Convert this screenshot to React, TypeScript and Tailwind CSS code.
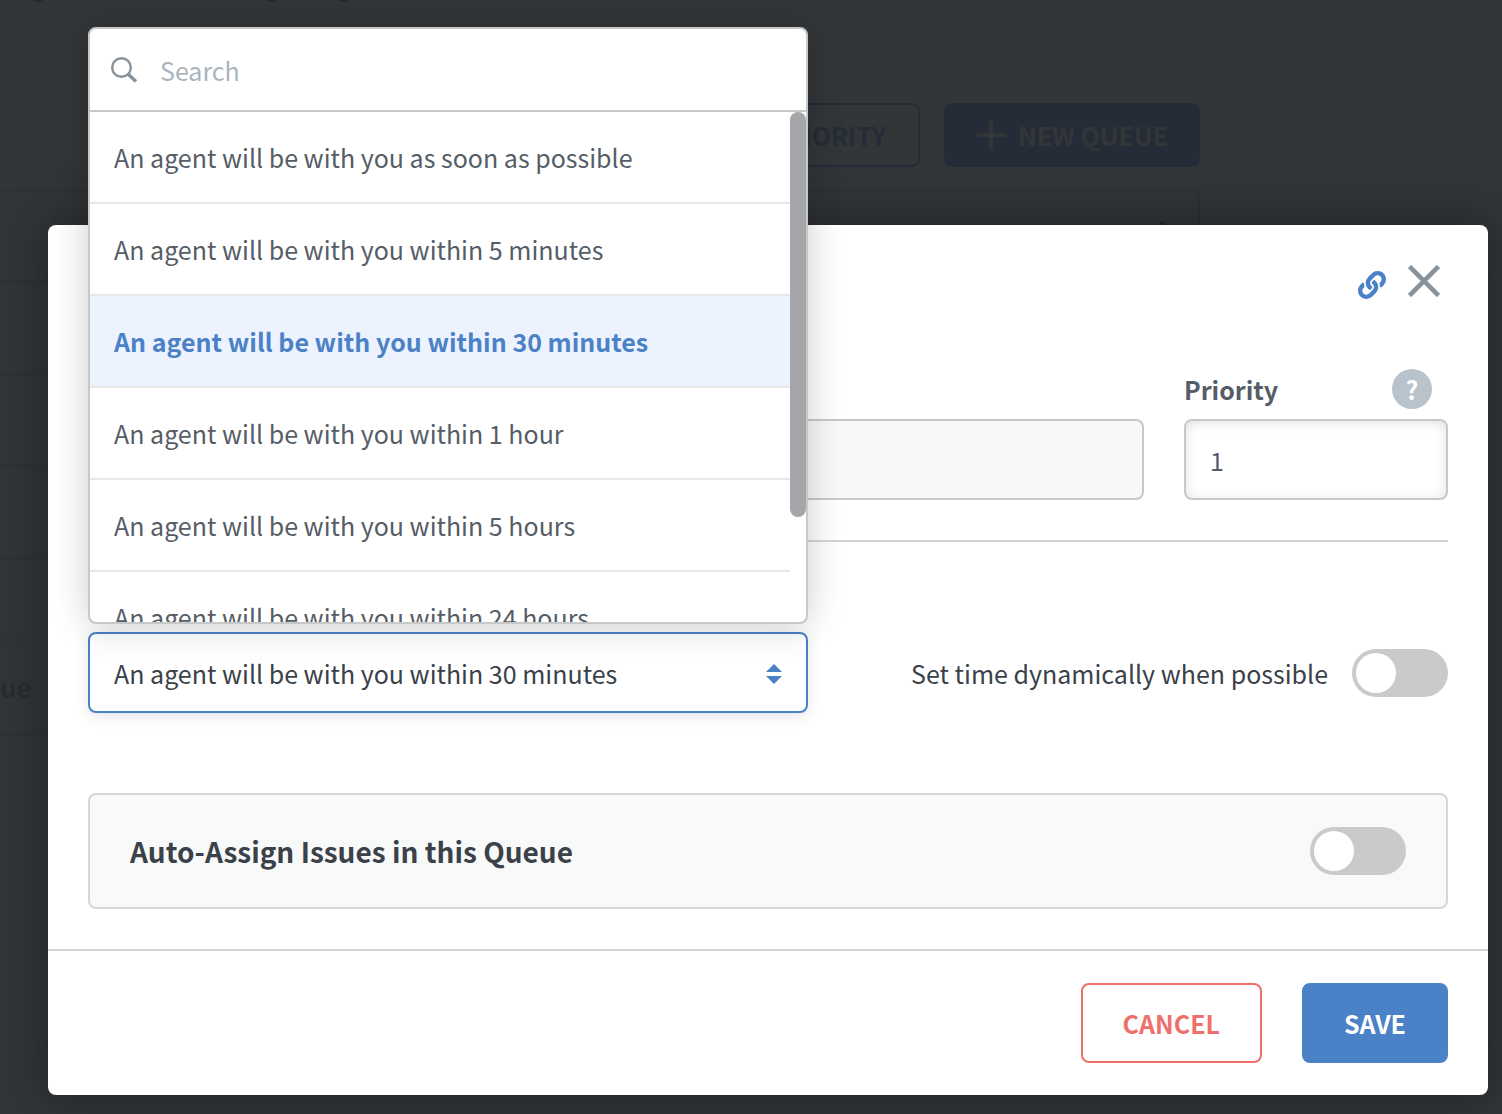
import { useState } from "react";
import { FaLink } from "react-icons/fa";

const waitMessages = [
  "An agent will be with you as soon as possible",
  "An agent will be with you within 5 minutes",
  "An agent will be with you within 30 minutes",
  "An agent will be with you within 1 hour",
  "An agent will be with you within 5 hours",
  "An agent will be with you within 24 hours",
];

const SearchIcon = () => (
  <svg className="w-7 h-7 shrink-0 text-[#87929a]" viewBox="0 0 28 28" fill="none" stroke="currentColor" aria-hidden="true">
    <circle cx="11.5" cy="11.5" r="9.3" strokeWidth="2.4" />
    <path d="M18 18L26 25.5" strokeWidth="3.4" />
  </svg>
);

const SortIcon = ({ className }: { className: string }) => (
  <svg className={className} viewBox="0 0 16 20" fill="currentColor" aria-hidden="true">
    <path d="M8 0L16 8H0Z" />
    <path d="M0 12H16L8 20Z" />
  </svg>
);

const Toggle = ({ id }: { id: string }) => (
  <input
    id={id}
    type="checkbox"
    role="switch"
    className="appearance-none shrink-0 w-24 h-12 p-1 rounded-full bg-[#c9cacc] cursor-pointer before:block before:w-10 before:h-10 before:rounded-full before:bg-white checked:bg-[#4b81c6] checked:before:ml-12"
  />
);

// Queue list that stays visible behind the dialog
const QueuePage = () => (
  <div className="absolute inset-0 overflow-hidden" aria-hidden="true">
    <svg className="block w-[400px] h-[3px] text-[#282b2d]" viewBox="0 0 400 3" fill="currentColor">
      <ellipse cx="38" cy="-1" rx="6" ry="3" />
      <ellipse cx="271" cy="-1" rx="6" ry="3" />
      <ellipse cx="343" cy="-1" rx="6" ry="3" />
    </svg>
    <div className="max-w-[1200px]">
      <div className="flex justify-end gap-6 pt-[100px] mb-[22px] font-bold">
        <button tabIndex={-1} className="h-16 px-8 rounded-lg border-2 border-[#252c38] text-[#252c38]">
          PRIORITY
        </button>
        <button tabIndex={-1} className="flex items-center gap-3 h-16 px-8 rounded-lg bg-[#252c38] text-[#323639]">
          <svg className="w-[30px] h-[30px]" viewBox="0 0 30 30" stroke="currentColor" strokeWidth="4">
            <path d="M15 1V29M1 15H29" />
          </svg>
          NEW QUEUE
        </button>
      </div>
      <div className="border-y-2 border-r-2 border-[#2e3234] rounded-tr-lg">
        <div className="flex justify-end h-[92px] pt-[30px] pr-7 border-b-2 border-[#2e3234]">
          <SortIcon className="w-4 h-5 text-[#202427]" />
        </div>
        <div className="h-[92px] border-b-2 border-[#2e3234]" />
        <div className="h-[92px] border-b-2 border-[#2e3234]" />
        <div className="h-[92px] border-b-2 border-[#2e3234]" />
        <div className="h-[82px] border-b-2 border-[#2e3234]" />
        <div className="flex items-center h-[92px] text-[26px] font-bold text-[#282c2e]">ue</div>
      </div>
    </div>
  </div>
);

const App = () => {
  const [message, setMessage] = useState(waitMessages[2]);
  const [search, setSearch] = useState("");
  const [priority, setPriority] = useState("1");

  const visible = waitMessages.filter((m) => m.toLowerCase().includes(search.toLowerCase()));

  return (
    <div className="relative min-h-screen bg-[#323639] font-['Noto_Sans_CJK_SC','Open_Sans',sans-serif] text-[25px] leading-9 text-[#555d66]">
      <QueuePage />

      <div className="relative pt-[225px] pl-12 pr-[14px] pb-[19px]">
        <div role="dialog" aria-label="Queue" className="bg-white rounded-lg shadow-[0_0_50px_rgba(28,26,28,0.8)]">
          <div className="px-10 pt-10 pb-10">
            <div className="flex items-start justify-end gap-[22px] h-16 pr-2">
              <a href="#link" aria-label="Copy link" className="mt-[6px] text-[#4b81c6]">
                <FaLink className="w-7 h-7" />
              </a>
              <button aria-label="Close" className="text-[#87929a]">
                <svg className="w-8 h-8" viewBox="0 0 32 32" stroke="currentColor" strokeWidth="4.6">
                  <path d="M1.5 1.5L30.5 30.5M30.5 1.5L1.5 30.5" />
                </svg>
              </button>
            </div>

            <div className="flex items-end gap-10 mt-10">
              <input
                aria-label="Name"
                disabled
                className="flex-1 min-w-0 h-[81px] px-6 rounded-lg border-2 border-[#c8c8c8] bg-[#f7f9f8]"
              />
              <div className="w-[264px]">
                <div className="flex items-center justify-between h-10 mb-[10px] pr-4">
                  <label htmlFor="priority" className="font-bold">Priority</label>
                  <button aria-label="Help" className="w-10 h-10 rounded-full bg-[#b8c3cc] text-white font-bold">
                    ?
                  </button>
                </div>
                <input
                  id="priority"
                  value={priority}
                  onChange={(e) => setPriority(e.target.value)}
                  className="block w-full h-[81px] px-6 rounded-lg border-2 border-[#c8c8c8] bg-white shadow-[inset_0_2px_12px_rgba(0,0,0,0.12)]"
                />
              </div>
            </div>

            <hr className="mt-10 border-t-2 border-[#d5d5d5]" />

            <div className="flex items-center justify-between gap-10 mt-[90px] text-[#3a4149]">
              <div className="relative w-[720px]">
                <select
                  aria-label="Wait time message"
                  value={message}
                  onChange={(e) => setMessage(e.target.value)}
                  className="block appearance-none w-full h-[81px] px-6 rounded-lg border-2 border-[#4b81c6] bg-white shadow-[0_4px_14px_rgba(0,0,0,0.1)]"
                >
                  {waitMessages.map((m) => (
                    <option key={m}>{m}</option>
                  ))}
                </select>
                <SortIcon className="absolute right-[26px] top-8 w-4 h-5 text-[#4b81c6] pointer-events-none" />

                <div className="absolute bottom-full left-0 w-full mb-2 rounded-lg border-2 border-[#c8c8c8] bg-white overflow-hidden shadow-[0_2px_36px_rgba(0,0,0,0.2)]">
                  <div className="flex items-center gap-[22px] h-[83px] px-5 border-b-2 border-[#c8c8c8]">
                    <SearchIcon />
                    <input
                      aria-label="Search"
                      placeholder="Search"
                      value={search}
                      onChange={(e) => setSearch(e.target.value)}
                      className="flex-1 min-w-0 outline-none placeholder:text-[#aab4bd]"
                    />
                  </div>
                  <div className="flex items-start h-[510px] overflow-hidden">
                    <ul role="listbox" aria-label="Wait time messages" className="flex-1">
                      {visible.map((m) => (
                        <li
                          key={m}
                          role="option"
                          aria-selected={m === message}
                          onClick={() => setMessage(m)}
                          className={`flex items-center h-[92px] px-6 border-b-2 border-[#e8e8e8] cursor-pointer ${
                            m === message ? "bg-[#ecf3fe] text-[#4b81c6] font-bold" : "text-[#555d66]"
                          }`}
                        >
                          {m}
                        </li>
                      ))}
                    </ul>
                    <div className="w-4 h-[405px] rounded-full bg-[#a5a6aa]" />
                  </div>
                </div>
              </div>

              <div className="flex items-center gap-6">
                <label htmlFor="dynamic-time">Set time dynamically when possible</label>
                <Toggle id="dynamic-time" />
              </div>
            </div>

            <div className="flex items-center justify-between h-[116px] mt-20 px-10 rounded-lg border-2 border-[#d5d7d6] bg-[#f8faf9]">
              <label htmlFor="auto-assign" className="text-[28px] font-bold text-[#3a4149]">
                Auto-Assign Issues in this Queue
              </label>
              <Toggle id="auto-assign" />
            </div>
          </div>

          <div className="flex justify-end gap-10 px-10 py-8 border-t-2 border-[#d5d5d5] font-bold">
            <button className="h-20 px-10 rounded-lg border-2 border-[#ef706b] text-[#ef706b]">CANCEL</button>
            <button className="h-20 px-10 rounded-lg border-2 border-[#4b81c6] bg-[#4b81c6] text-white">SAVE</button>
          </div>
        </div>
      </div>
    </div>
  );
};

export default App;
